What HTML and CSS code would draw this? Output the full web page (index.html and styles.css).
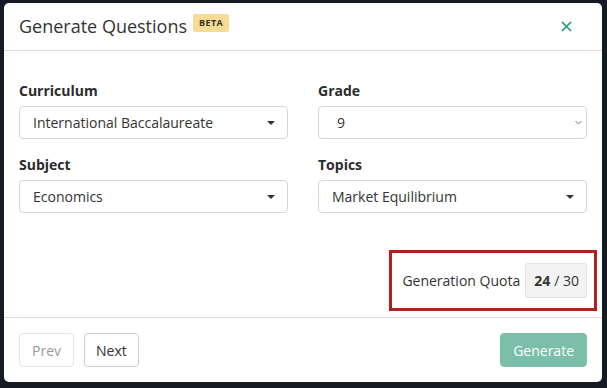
FILE: index.html
```html
<!DOCTYPE html>
<html>
<head>
<title>Generate Questions</title>
<link rel="stylesheet" href="styles.css">
</head>
<body>

<div class="modal">
  <div class="modal-header">
    <h4 class="modal-title">Generate Questions <span class="badge-beta">BETA</span></h4>
    <button class="close-btn" aria-label="Close">
      <svg width="11" height="11" viewBox="0 0 11 11"><path d="M1 1 L10 10 M10 1 L1 10" stroke="#1f9574" stroke-width="1.6" fill="none"/></svg>
    </button>
  </div>

  <div class="modal-body">
    <div class="form-grid">
      <div class="form-item">
        <label>Curriculum</label>
        <div class="fake-select">
          <span>International Baccalaureate</span>
          <span class="caret"></span>
        </div>
      </div>
      <div class="form-item">
        <label>Grade</label>
        <div class="fake-select native">
          <span>9</span>
          <svg class="chevron" width="7" height="5" viewBox="0 0 7 5"><path d="M0.5 1 L3.5 4 L6.5 1" stroke="#777" stroke-width="1" fill="none"/></svg>
        </div>
      </div>
      <div class="form-item">
        <label>Subject</label>
        <div class="fake-select">
          <span>Economics</span>
          <span class="caret"></span>
        </div>
      </div>
      <div class="form-item">
        <label>Topics</label>
        <div class="fake-select">
          <span>Market Equilibrium</span>
          <span class="caret"></span>
        </div>
      </div>
    </div>

    <div class="quota-row">
      <div class="quota-box">
        <span class="quota-label">Generation Quota</span>
        <span class="quota-count"><b>24</b> / 30</span>
      </div>
    </div>
  </div>

  <div class="modal-footer">
    <div class="pager">
      <button class="btn" disabled>Prev</button>
      <button class="btn btn-next">Next</button>
    </div>
    <button class="btn btn-primary" disabled>Generate</button>
  </div>
</div>

</body>
</html>
```

FILE: styles.css
```css
body {
  margin: 0;
  padding: 3px 5px 6px 4px;
  background-color: #161a22; /* page dimmed behind the modal */
  font-family: "Open Sans", "Noto Sans", sans-serif;
  color: #333;
}
.modal {
  background-color: #fff;
  border-radius: 5px;
  height: 379px;
  display: flex;
  flex-direction: column;
}
.modal-header {
  display: flex;
  align-items: center;
  justify-content: space-between;
  height: 47px;
  padding: 0 15px;
  border-bottom: 1px solid #dcdcdc;
}
.modal-title {
  margin: 0;
  font-size: 18px;
  font-weight: normal;
  display: flex;
  align-items: center;
  gap: 6px;
  position: relative;
  top: -1px;
}
.badge-beta {
  background-color: #f6dc97;
  color: #3a3320;
  font-size: 9px;
  line-height: 12px;
  font-weight: bold;
  letter-spacing: 0.4px;
  padding: 3px 6px;
  border-radius: 2px;
  position: relative;
  top: -3px;
}
.close-btn {
  border: none;
  background: none;
  padding: 0;
  margin-right: 15px;
  cursor: pointer;
  display: flex;
}
.modal-body {
  flex: 1;
  padding: 30px 15px 0 15px;
}
.form-grid {
  display: grid;
  grid-template-columns: 1fr 1fr;
  column-gap: 30px;
  row-gap: 16px;
}
.form-item label {
  display: block;
  font-size: 14px;
  font-weight: bold;
  color: #2b2b2b;
  line-height: 20px;
  margin-bottom: 5px;
}
.fake-select {
  display: flex;
  align-items: center;
  justify-content: space-between;
  height: 31px;
  padding: 0 10px 0 13px;
  border: 1px solid #d6d6d6;
  border-radius: 4px;
  font-size: 14px;
  color: #333;
}
.fake-select.native {
  padding: 0 4px 0 18px;
}
.caret {
  width: 0;
  height: 0;
  border-left: 4px solid transparent;
  border-right: 4px solid transparent;
  border-top: 4px solid #333;
  margin-right: 2px;
}
.quota-row {
  display: flex;
  justify-content: flex-end;
  margin-top: 37px;
  margin-right: -10px;
}
.quota-box {
  display: flex;
  align-items: center;
  border: 3px solid #b0201c;
  padding: 10px 7px 10px 10px;
}
.quota-label {
  font-size: 14px;
  color: #333;
  margin-right: 5px;
}
.quota-count {
  display: flex;
  align-items: center;
  height: 33px;
  padding: 0 7px 0 8px;
  background-color: #f3f3f3;
  border: 1px solid #e2e2e2;
  border-radius: 3px;
  font-size: 14px;
  gap: 4px;
}
.modal-footer {
  display: flex;
  align-items: center;
  justify-content: space-between;
  height: 64px;
  padding: 0 15px;
  border-top: 1px solid #dcdcdc;
}
.pager {
  display: flex;
  gap: 10px;
}
.btn {
  font-family: inherit;
  font-size: 14px;
  height: 34px;
  padding: 0 12px;
  border: 1px solid #cfcfcf;
  border-radius: 4px;
  background-color: #fff;
  color: #333;
  cursor: pointer;
}
.btn-next {
  padding: 0 11px;
}
.btn:disabled {
  color: #999;
  border-color: #e4e4e4;
  cursor: default;
}
.btn-primary,
.btn-primary:disabled {
  background-color: #7bbea9;
  border-color: #7bbea9;
  color: #fff;
  padding: 0 12px;
}
```
